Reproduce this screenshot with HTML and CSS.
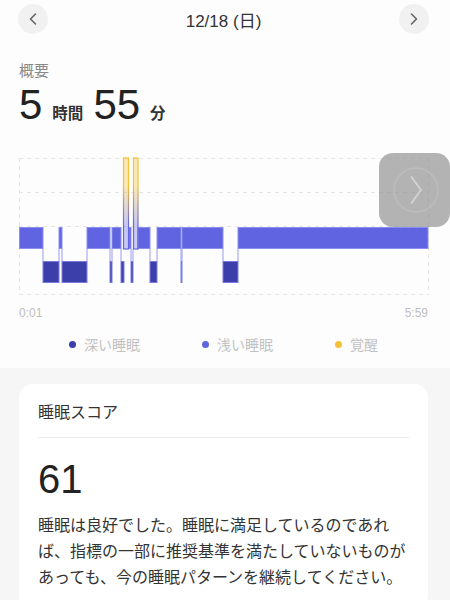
FILE: index.html
```html
<!DOCTYPE html>
<html lang="ja">
<head>
    <meta charset="UTF-8">
    <meta name="viewport" content="width=device-width, initial-scale=1.0">
    <title>睡眠</title>
    <link rel="stylesheet" href="styles.css">
</head>
<body>
    <header class="nav">
        <button class="nav-btn" aria-label="前の日">
            <svg width="30" height="30" viewBox="0 0 30 30"><path d="M17.5 10 L12.5 15 L17.5 20" fill="none" stroke="#666" stroke-width="1.6" stroke-linecap="round" stroke-linejoin="round"/></svg>
        </button>
        <div class="nav-title">12/18 (日)</div>
        <button class="nav-btn" aria-label="次の日">
            <svg width="30" height="30" viewBox="0 0 30 30"><path d="M12.5 10 L17.5 15 L12.5 20" fill="none" stroke="#666" stroke-width="1.6" stroke-linecap="round" stroke-linejoin="round"/></svg>
        </button>
    </header>

    <section class="summary">
        <div class="label">概要</div>
        <div class="total">
            <span class="num">5</span><span class="unit">時間</span>
            <span class="num">55</span><span class="unit">分</span>
        </div>

        <div class="chart">
            <svg class="chart-svg" width="410" height="140" viewBox="0 0 410 140">
                <defs>
                    <linearGradient id="awake" x1="0" y1="1" x2="0" y2="92" gradientUnits="userSpaceOnUse">
                        <stop offset="0" stop-color="#f5c139"/>
                        <stop offset="0.3" stop-color="#f5c139"/>
                        <stop offset="0.75" stop-color="#6366e0"/>
                        <stop offset="1" stop-color="#6366e0"/>
                    </linearGradient>
                </defs>
                <g stroke="#e6e6e6" stroke-width="1" stroke-dasharray="4 4">
                    <line x1="0" y1="1.5" x2="410" y2="1.5"/>
                    <line x1="0" y1="35.5" x2="410" y2="35.5"/>
                    <line x1="0" y1="69.5" x2="410" y2="69.5"/>
                    <line x1="0" y1="137.5" x2="410" y2="137.5"/>
                    <line x1="0.5" y1="1" x2="0.5" y2="138"/>
                    <line x1="409.5" y1="1" x2="409.5" y2="138"/>
                </g>
                <!-- step connectors -->
                <g stroke="#9a9cee" stroke-width="1">
                    <line x1="24" y1="92" x2="24" y2="104"/>
                    <line x1="40" y1="92" x2="40" y2="104"/>
                    <line x1="43" y1="92" x2="43" y2="104"/>
                    <line x1="68" y1="92" x2="68" y2="104"/>
                    <line x1="91" y1="92" x2="91" y2="104"/>
                    <line x1="93" y1="92" x2="93" y2="104"/>
                    <line x1="102" y1="92" x2="102" y2="104"/>
                    <line x1="112" y1="92" x2="112" y2="104"/>
                    <line x1="114" y1="92" x2="114" y2="104"/>
                    <line x1="131" y1="92" x2="131" y2="104"/>
                    <line x1="138" y1="92" x2="138" y2="104"/>
                    <line x1="162" y1="92" x2="162" y2="104"/>
                    <line x1="163" y1="92" x2="163" y2="104"/>
                    <line x1="204" y1="92" x2="204" y2="104"/>
                    <line x1="219" y1="92" x2="219" y2="104"/>
                </g>
                <!-- light sleep -->
                <g fill="#6064e0" stroke="#8c8fef" stroke-width="1">
                    <rect x="0.5" y="70.5" width="23.5" height="21"/>
                    <rect x="40" y="70.5" width="3" height="21"/>
                    <rect x="68" y="70.5" width="23" height="21"/>
                    <rect x="93" y="70.5" width="9" height="21"/>
                    <rect x="110" y="70.5" width="2" height="21"/>
                    <rect x="119" y="70.5" width="12" height="21"/>
                    <rect x="138" y="70.5" width="24" height="21"/>
                    <rect x="163" y="70.5" width="41" height="21"/>
                    <rect x="219" y="70.5" width="190" height="21"/>
                </g>
                <!-- deep sleep -->
                <g fill="#3c3fa9" stroke="#7a7ddf" stroke-width="1">
                    <rect x="24" y="104.5" width="16" height="21"/>
                    <rect x="43" y="104.5" width="25" height="21"/>
                    <rect x="91" y="104.5" width="2" height="21"/>
                    <rect x="102" y="104.5" width="3" height="21"/>
                    <rect x="112" y="104.5" width="2" height="21"/>
                    <rect x="131" y="104.5" width="7" height="21"/>
                    <rect x="162" y="104.5" width="1" height="21"/>
                    <rect x="204" y="104.5" width="15" height="21"/>
                </g>
                <!-- awake -->
                <g fill="url(#awake)" fill-opacity="0.35" stroke="url(#awake)" stroke-width="1.2">
                    <rect x="104.5" y="1" width="5" height="91"/>
                    <rect x="114.5" y="1" width="4.5" height="91"/>
                </g>
            </svg>
            <div class="chart-next">
                <svg width="48" height="48" viewBox="0 0 48 48">
                    <circle cx="24" cy="24" r="22" fill="none" stroke="rgba(255,255,255,0.12)" stroke-width="1.5"/>
                    <path d="M19.5 11 L29 24 L19.5 37" fill="none" stroke="rgba(255,255,255,0.4)" stroke-width="2" stroke-linecap="round" stroke-linejoin="round"/>
                </svg>
            </div>
        </div>

        <div class="axis">
            <span>0:01</span>
            <span>5:59</span>
        </div>

        <ul class="legend">
            <li><span class="dot dot-deep"></span>深い睡眠</li>
            <li><span class="dot dot-light"></span>浅い睡眠</li>
            <li><span class="dot dot-awake"></span>覚醒</li>
        </ul>
    </section>

    <main class="details">
        <div class="card">
            <h2 class="card-title">睡眠スコア</h2>
            <div class="score">61</div>
            <p class="score-text">睡眠は良好でした。睡眠に満足しているのであれ<br>ば、指標の一部に推奨基準を満たしていないものが<br>あっても、今の睡眠パターンを継続してください。</p>
        </div>
    </main>
</body>
</html>
```

FILE: styles.css
```css
body {
    margin: 0;
    padding: 0;
    background-color: #f6f6f6;
    font-family: "Liberation Sans", "Noto Sans CJK JP", sans-serif;
    color: #333;
    overflow: hidden;
}

.nav {
    display: flex;
    align-items: center;
    justify-content: space-between;
    height: 30px;
    padding: 4px 21px 0 18px;
    background-color: #fdfdfd;
}

.nav-btn {
    width: 30px;
    height: 30px;
    padding: 0;
    border: none;
    border-radius: 50%;
    background-color: #f1f1f1;
}

.nav-btn svg {
    display: block;
}

.nav-title {
    font-size: 17px;
    color: #333;
}

.summary {
    background-color: #fdfdfd;
    padding: 26px 19px 14px;
}

.label {
    font-family: "Noto Sans CJK JP", sans-serif;
    font-size: 15px;
    line-height: 20px;
    color: #8a8a8a;
}

.total {
    display: flex;
    align-items: baseline;
    margin-top: 1px;
    height: 48px;
}

.num {
    font-size: 42px;
    line-height: 48px;
    color: #222;
}

.unit {
    font-family: "Noto Sans CJK JP", sans-serif;
    font-size: 15.5px;
    font-weight: bold;
    color: #333;
    margin: 0 10px 0 10px;
}

.chart {
    position: relative;
    margin-top: 28px;
    height: 140px;
}

.chart-svg {
    display: block;
}

.chart-next {
    position: absolute;
    top: -4px;
    right: -19px;
    width: 71px;
    height: 74px;
    border-radius: 14px;
    background-color: rgba(140, 140, 140, 0.65);
    display: flex;
    align-items: center;
    justify-content: center;
}

.chart-next svg {
    margin-left: 2px;
}

.axis {
    display: flex;
    justify-content: space-between;
    margin-top: 8px;
    padding-right: 3px;
    font-size: 12px;
    line-height: 16px;
    color: #bdbdbd;
}

.legend {
    display: flex;
    justify-content: center;
    gap: 62px;
    list-style: none;
    margin: 13px 0 0;
    padding: 0 3px 0 0;
    font-family: "Noto Sans CJK JP", sans-serif;
    font-size: 14px;
    line-height: 20px;
    color: #c2c2c2;
}

.legend li {
    display: flex;
    align-items: center;
    gap: 8px;
}

.dot {
    width: 7px;
    height: 7px;
    border-radius: 50%;
}

.dot-deep {
    background-color: #3c3fa9;
}

.dot-light {
    background-color: #6064e0;
}

.dot-awake {
    background-color: #f5c139;
}

.details {
    padding: 16px 22px 40px 19px;
}

.card {
    background-color: white;
    border-radius: 14px;
    padding: 16px 19px 20px;
}

.card-title {
    margin: 0;
    padding-bottom: 15px;
    border-bottom: 1px solid #ededed;
    font-family: "Noto Sans CJK JP", sans-serif;
    font-size: 16px;
    font-weight: normal;
    line-height: 22px;
    color: #333;
}

.score {
    margin-top: 18px;
    font-size: 40px;
    line-height: 46px;
    color: #222;
}

.score-text {
    margin: 9px 0 0;
    font-family: "Noto Sans CJK JP", sans-serif;
    font-size: 16px;
    line-height: 26px;
    color: #333;
    white-space: nowrap;
}
```
